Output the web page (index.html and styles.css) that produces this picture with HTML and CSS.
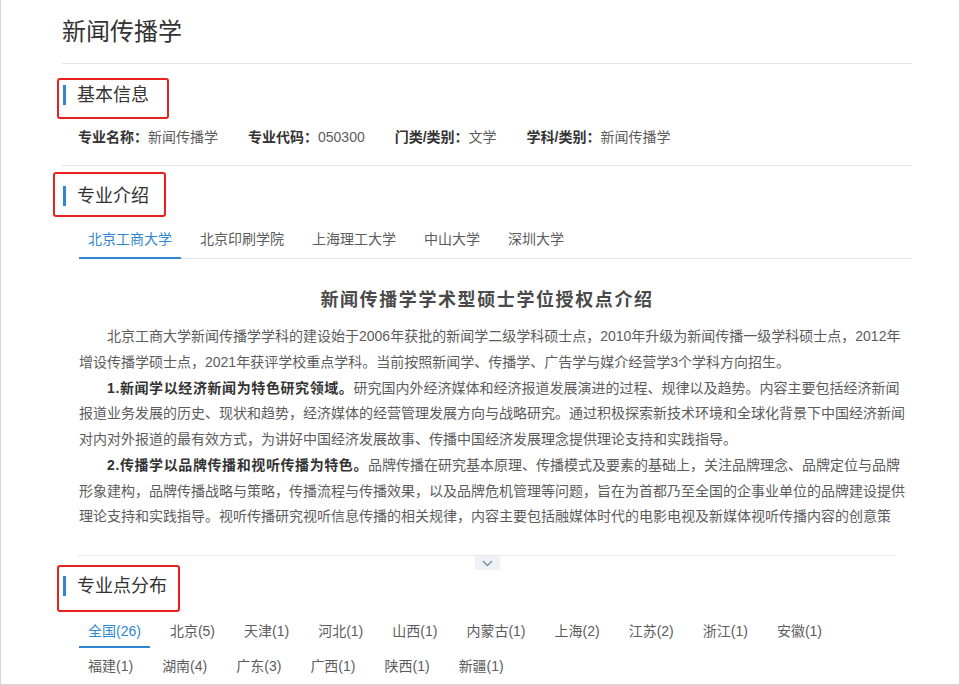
FILE: index.html
```html
<!DOCTYPE html>
<html lang="zh-CN">
  <head>
    <meta charset="UTF-8" />
    <meta name="viewport" content="width=device-width, initial-scale=1.0" />
    <title>新闻传播学</title>
    <link rel="stylesheet" href="styles.css">
  </head>
  <body>
    <div class="page">
      <div class="main">
        <h1 class="major-name">新闻传播学</h1>

        <div class="section section-info">
          <h2 class="sec-title">基本信息<span class="mark mark-info"></span></h2>
          <div class="info-row">
            <p><b>专业名称：</b>新闻传播学</p>
            <p><b>专业代码：</b>050300</p>
            <p><b>门类/类别：</b>文学</p>
            <p><b>学科/类别：</b>新闻传播学</p>
          </div>
        </div>

        <div class="section section-intro">
          <h2 class="sec-title">专业介绍<span class="mark mark-intro"></span></h2>
          <ul class="tabs">
            <li class="active">北京工商大学</li>
            <li>北京印刷学院</li>
            <li>上海理工大学</li>
            <li>中山大学</li>
            <li>深圳大学</li>
          </ul>

          <div class="article">
            <h3 class="article-title">新闻传播学学术型硕士学位授权点介绍</h3>
            <div class="article-body">
              <p>北京工商大学新闻传播学学科的建设始于2006年获批的新闻学二级学科硕士点，2010年升级为新闻传播一级学科硕士点，2012年增设传播学硕士点，2021年获评学校重点学科。当前按照新闻学、传播学、广告学与媒介经营学3个学科方向招生。</p>
              <p><b>1.新闻学以经济新闻为特色研究领域。</b>研究国内外经济媒体和经济报道发展演进的过程、规律以及趋势。内容主要包括经济新闻报道业务发展的历史、现状和趋势，经济媒体的经营管理发展方向与战略研究。通过积极探索新技术环境和全球化背景下中国经济新闻对内对外报道的最有效方式，为讲好中国经济发展故事、传播中国经济发展理念提供理论支持和实践指导。</p>
              <p><b>2.传播学以品牌传播和视听传播为特色。</b>品牌传播在研究基本原理、传播模式及要素的基础上，关注品牌理念、品牌定位与品牌形象建构，品牌传播战略与策略，传播流程与传播效果，以及品牌危机管理等问题，旨在为首都乃至全国的企事业单位的品牌建设提供理论支持和实践指导。视听传播研究视听信息传播的相关规律，内容主要包括融媒体时代的电影电视及新媒体视听传播内容的创意策划、制作与传播等。</p>
              <p><b>3.广告学与媒介经营学方向。</b>研究广告传播与媒介经营管理的基本规律。</p>
            </div>
          </div>

          <div class="fold">
            <span class="fold-btn">
              <svg width="11" height="7" viewBox="0 0 11 7"><polyline points="1,1 5.5,5.5 10,1" fill="none" stroke="#7d8b99" stroke-width="1.4" /></svg>
            </span>
          </div>
        </div>

        <div class="section section-dist">
          <h2 class="sec-title">专业点分布<span class="mark mark-dist"></span></h2>
          <ul class="tabs area-tabs">
            <li class="active">全国(26)</li>
            <li>北京(5)</li>
            <li>天津(1)</li>
            <li>河北(1)</li>
            <li>山西(1)</li>
            <li>内蒙古(1)</li>
            <li>上海(2)</li>
            <li>江苏(2)</li>
            <li>浙江(1)</li>
            <li>安徽(1)</li>
            <li>福建(1)</li>
            <li>湖南(4)</li>
            <li>广东(3)</li>
            <li>广西(1)</li>
            <li>陕西(1)</li>
            <li>新疆(1)</li>
          </ul>
        </div>
      </div>
    </div>
  </body>
</html>
```

FILE: styles.css
```css
body {
  margin: 0;
  font-family: "Liberation Sans", "Noto Sans CJK SC", sans-serif;
  color: #5c5c5c;
  background: #fff;
}

* {
  margin: 0;
  padding: 0;
}

ul {
  list-style: none;
}

.page {
  height: 685px;
  box-sizing: border-box;
  border: 1px solid #d6d6d6;
  border-top: none;
  overflow: hidden;
}

.main {
  width: 850px;
  margin-left: 61px;
}

.major-name {
  font-size: 24px;
  font-weight: normal;
  color: #333;
  line-height: 36px;
  padding: 14px 0 13px;
  border-bottom: 1px solid #e6e6e6;
}

/* section headers */
.sec-title {
  position: relative;
  display: inline-flex;
  align-items: center;
  font-size: 18px;
  font-weight: normal;
  color: #333;
  line-height: 20px;
  margin-left: 1px;
}

.sec-title::before {
  content: "";
  width: 3px;
  height: 20px;
  background: #2f87d3;
  margin-right: 11px;
}

.mark {
  position: absolute;
  border: 2px solid #e8211d;
  border-radius: 3px;
}

.mark-info {
  top: -7px;
  bottom: -14px;
  left: -6px;
  right: -20px;
}

.mark-intro {
  top: -14px;
  bottom: -11px;
  left: -10px;
  right: -17px;
}

.mark-dist {
  top: -11px;
  bottom: -16px;
  left: -6px;
  right: -13px;
}

.section-info {
  padding-top: 21px;
  padding-bottom: 18px;
  border-bottom: 1px solid #e6e6e6;
}

.info-row {
  display: flex;
  gap: 30px;
  padding-left: 16px;
  margin-top: 18px;
  font-size: 14px;
  line-height: 20px;
}

.info-row b {
  color: #333;
}

.section-intro {
  padding-top: 20px;
}

/* tabs */
.tabs {
  display: flex;
  margin-top: 11px;
  margin-left: 17px;
  border-bottom: 1px solid #e4e4e4;
  font-size: 14px;
}

.tabs li {
  padding: 0 9px;
  margin-right: 10px;
  line-height: 36px;
  border-bottom: 2px solid transparent;
  margin-bottom: -1px;
  color: #5c5c5c;
}

.tabs li.active {
  color: #2f87d3;
  border-bottom-color: #2f87d3;
}

.article {
  width: 828px;
  margin-left: 17px;
}

.article-title {
  margin-top: 26px;
  margin-right: 12px;
  text-align: center;
  font-size: 18px;
  line-height: 30px;
  letter-spacing: 1.6px;
  color: #4a4a4a;
}

.article-body {
  margin-top: 9px;
  max-height: 206px;
  overflow: hidden;
  font-size: 14px;
  line-height: 1.84;
}

.article-body p {
  text-indent: 2em;
}

.article-body b {
  color: #333;
  letter-spacing: 0.6px;
}

.fold {
  width: 818px;
  margin-left: 16px;
  margin-top: 25px;
  border-top: 1px solid #e8e8e8;
  display: flex;
  justify-content: center;
}

.fold-btn {
  width: 25px;
  height: 14px;
  background: #eef2f6;
  display: flex;
  align-items: center;
  justify-content: center;
}

.section-dist {
  padding-top: 6px;
}

.area-tabs {
  margin-top: 16px;
  max-width: 800px;
  flex-wrap: wrap;
  row-gap: 3px;
  border-bottom: none;
}

.area-tabs li {
  line-height: 30px;
  margin-right: 11px;
  margin-bottom: 0;
}
```
